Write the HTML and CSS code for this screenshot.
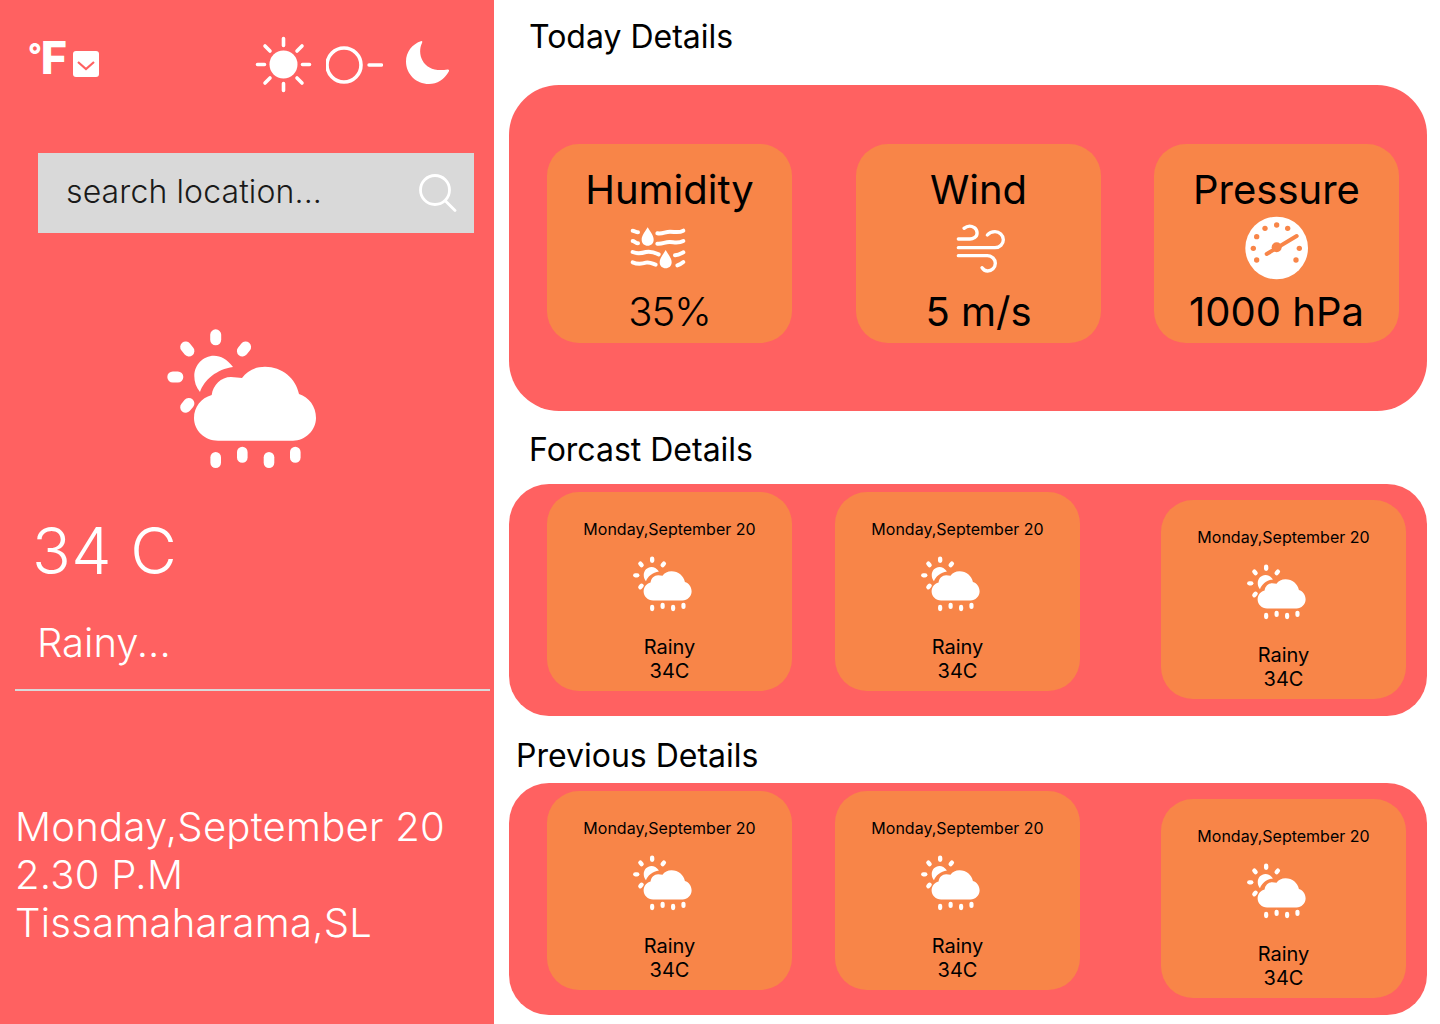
FILE: index.html
```html
<!DOCTYPE html>
<html lang="en">
<head>
<meta charset="UTF-8">
<meta name="viewport" content="width=device-width, initial-scale=1.0">
<title>Weather Dashboard</title>
<link rel="stylesheet" href="styles.css">
</head>
<body>
  <!-- shared weather icon -->
  <svg class="defs">
    <symbol id="rain-sun" viewBox="0 0 150 142">
      <g fill="#fff">
        <rect x="43.2" y="1.3" width="11" height="16" rx="5.5"/>
        <rect x="14.8" y="13" width="11" height="16" rx="5.5" transform="rotate(-40 20.3 21)"/>
        <rect x="71.5" y="13" width="11" height="16" rx="5.5" transform="rotate(40 77 21)"/>
        <rect x="0.3" y="43.5" width="16" height="11" rx="5.5"/>
        <rect x="14.8" y="69.3" width="11" height="16" rx="5.5" transform="rotate(40 20.3 77.3)"/>
        <path d="M66 39C60 31 54 27.7 47 27.7C36 27.7 27.3 37 27.3 48C27.3 54 29 59 33 64C37 52 50 41 66 39Z"/>
        <path d="M51 112.7C37.7 112.7 27 102.5 27 90C27 79 34 70 44.7 67C46 57 54 49 64 49C68 49 72 50 75 50C80 43 88 38.7 98 38.7C115 38.7 129 50.5 132 66C142 69 149 78.5 149 90C149 102.5 138 112.7 126 112.7Z"/>
        <rect x="43.4" y="124" width="10.6" height="16" rx="5.3"/>
        <rect x="70" y="118.7" width="10.6" height="16" rx="5.3"/>
        <rect x="96.7" y="124" width="10.6" height="16" rx="5.3"/>
        <rect x="123" y="118.7" width="10.6" height="16" rx="5.3"/>
      </g>
    </symbol>
  </svg>

  <div class="layout">
    <aside class="sidebar">
      <div class="top-bar">
        <div class="unit"><span class="deg">°</span>F</div>
        <svg class="unit-check" viewBox="0 0 26 26">
          <rect width="26" height="26" rx="3" fill="#fff"/>
          <path d="M5 11L13 18L21 11" fill="none" stroke="#ff6161" stroke-width="2.2"/>
        </svg>
        <div class="theme-icons">
          <svg class="sun" viewBox="0 0 57 57">
            <circle cx="28.5" cy="28.5" r="14" fill="#fff"/>
            <path d="M28.5 2.500V9.500M28.500 47.500V54.500M2.500 28.500H9.500M47.500 28.500H54.500M10 10L15 15M42 42L47 47M47 10L42 15M15 42L10 47" stroke="#fff" stroke-width="3.600" stroke-linecap="round"/>
          </svg>
          <svg class="toggle" viewBox="0 0 57 40">
            <circle cx="18" cy="20" r="17" fill="none" stroke="#fff" stroke-width="3.600"/>
            <path d="M43 20H55.500" stroke="#fff" stroke-width="3.400" stroke-linecap="round"/>
          </svg>
          <svg class="moon" viewBox="0 0 45 45">
            <path d="M16.500 1C17.500 1 17.500 2 17 3C14.500 8 14.500 15 17.500 20.500C21.500 28 30 31.500 42.500 29.500C44 29.200 44.500 30.500 43.800 31.500C39.500 39.500 32 44 24 44C11 44 1 34 1 21.500C1 12 7 4 16.500 1Z" fill="#fff"/>
          </svg>
        </div>
      </div>

      <div class="search">
        <span class="search-text">search location...</span>
        <svg class="search-icon" viewBox="0 0 38 38">
          <circle cx="16" cy="16" r="14.500" fill="none" stroke="#fff" stroke-width="2.800"/>
          <path d="M26.500 27L36 36.500" stroke="#fff" stroke-width="2.800" stroke-linecap="round"/>
        </svg>
      </div>

      <svg class="main-icon"><use href="#rain-sun"/></svg>
      <div class="temp">34 C</div>
      <div class="condition">Rainy...</div>
      <div class="divider"></div>
      <div class="date-info">
        Monday,September 20<br>
        2.30 P.M<br>
        Tissamaharama,SL
      </div>
    </aside>

    <main class="content">
      <h2 class="heading heading-today">Today Details</h2>
      <section class="panel panel-today">
        <div class="card stat-card">
          <div class="stat-text">Humidity</div>
          <div class="stat-icon">
            <svg class="humidity-icon" viewBox="0 0 330 210">
              <g fill="#fff">
                <path d="M113 37C122 52 131 62 131 74C131 85 123 92 113 92C103 92 95 85 95 74C95 62 104 52 113 37Z"/>
                <path d="M167 105C176 120 185 130 185 142C185 153 177 160 167 160C157 160 149 153 149 142C149 130 158 120 167 105Z"/>
              </g>
              <g fill="none" stroke="#fff" stroke-width="12" stroke-linecap="round">
                <path d="M68 47C73 47 78 52 84 52"/>
                <path d="M142 55C158 58 165 50 180 50C195 50 205 55 220 47"/>
                <path d="M68 78C73 78 78 85 84 85"/>
                <path d="M142 86C158 88 165 80 180 81C195 82 205 86 220 78"/>
                <path d="M68 111C80 116 95 115 108 111C120 108 135 113 146 118"/>
                <path d="M195 121C205 120 212 116 220 112"/>
                <path d="M68 142C80 147 95 147 108 143C118 140 128 146 137 149"/>
                <path d="M202 151C208 149 214 146 220 141"/>
              </g>
            </svg>
          </div>
          <div class="stat-text stat-percent">35%</div>
        </div>
        <div class="card stat-card stat-wind">
          <div class="stat-text">Wind</div>
          <div class="stat-icon">
            <svg class="wind-icon" viewBox="0 0 240 210">
              <g fill="none" stroke="#fff" stroke-width="10" stroke-linecap="round">
                <path d="M72 40C82 32 94 32 103 38C114 46 114 62 103 68C99 71 95 72 90 72H55"/>
                <path d="M55 98H165C180 98 190 87 190 74C190 60 178 50 165 50C155 50 147 54 142 60"/>
                <path d="M55 122H142C156 122 166 133 166 145C166 158 155 168 143 168C136 168 130 165 126 158"/>
              </g>
            </svg>
          </div>
          <div class="stat-text">5 m/s</div>
        </div>
        <div class="card stat-card stat-pressure">
          <div class="stat-text">Pressure</div>
          <div class="stat-icon">
            <svg class="gauge-icon" viewBox="0 0 255 225">
              <circle cx="125" cy="114" r="94" fill="#fff"/>
              <g fill="#f88548">
                <circle cx="55" cy="115" r="8"/>
                <circle cx="65" cy="80" r="8"/>
                <circle cx="90" cy="55" r="8"/>
                <circle cx="125" cy="45" r="8"/>
                <circle cx="158" cy="55" r="8"/>
                <circle cx="193" cy="115" r="8"/>
                <circle cx="183" cy="150" r="8"/>
                <circle cx="65" cy="150" r="8"/>
                <circle cx="125" cy="112" r="15"/>
              </g>
              <path d="M95 132L185 78" stroke="#f88548" stroke-width="12" stroke-linecap="round"/>
            </svg>
          </div>
          <div class="stat-text">1000 hPa</div>
        </div>
      </section>

      <h2 class="heading heading-forcast">Forcast Details</h2>
      <section class="panel panel-days">
        <div class="card day-card">
          <div class="day-date">Monday,September 20</div>
          <svg class="day-icon"><use href="#rain-sun"/></svg>
          <div class="day-text">Rainy<br>34C</div>
        </div>
        <div class="card day-card day-second">
          <div class="day-date">Monday,September 20</div>
          <svg class="day-icon"><use href="#rain-sun"/></svg>
          <div class="day-text">Rainy<br>34C</div>
        </div>
        <div class="card day-card day-third">
          <div class="day-date">Monday,September 20</div>
          <svg class="day-icon"><use href="#rain-sun"/></svg>
          <div class="day-text">Rainy<br>34C</div>
        </div>
      </section>

      <h2 class="heading heading-previous">Previous Details</h2>
      <section class="panel panel-days">
        <div class="card day-card">
          <div class="day-date">Monday,September 20</div>
          <svg class="day-icon"><use href="#rain-sun"/></svg>
          <div class="day-text">Rainy<br>34C</div>
        </div>
        <div class="card day-card day-second">
          <div class="day-date">Monday,September 20</div>
          <svg class="day-icon"><use href="#rain-sun"/></svg>
          <div class="day-text">Rainy<br>34C</div>
        </div>
        <div class="card day-card day-third">
          <div class="day-date">Monday,September 20</div>
          <svg class="day-icon"><use href="#rain-sun"/></svg>
          <div class="day-text">Rainy<br>34C</div>
        </div>
      </section>
    </main>
  </div>
</body>
</html>
```

FILE: styles.css
```css
body {
  margin: 0;
  background: #fff;
  color: #000;
  font-family: "Inter", sans-serif;
}

.defs {
  display: none;
}

.layout {
  display: flex;
  height: 1024px;
  overflow: hidden;
}

/* left column */
.sidebar {
  width: 494px;
  flex: none;
  padding-top: 36px;
  background: #ff6161;
  color: #fff;
  font-weight: 300;
}

.top-bar {
  display: flex;
  align-items: center;
  height: 56px;
  padding: 0 44px 0 28px;
}

.unit {
  font-size: 45px;
  font-weight: 800;
  line-height: 44px;
  margin-top: -16px;
}

.deg {
  font-size: 30px;
  vertical-align: 9px;
  margin-right: -1px;
}

.unit-check {
  width: 26px;
  height: 26px;
  margin: 0 0 0 6px;
}

.theme-icons {
  display: flex;
  align-items: center;
  margin-left: auto;
}

.sun {
  width: 57px;
  height: 57px;
}

.toggle {
  width: 57px;
  height: 40px;
  margin-left: 14px;
  margin-top: 2px;
}

.moon {
  width: 45px;
  height: 45px;
  margin-left: 22px;
  margin-top: -4px;
}

.search {
  display: flex;
  align-items: center;
  justify-content: space-between;
  box-sizing: border-box;
  width: 436px;
  height: 80px;
  margin: 61px 0 0 38px;
  padding: 0 17px 0 28px;
  background: #d9d9d9;
}

.search-text {
  margin-bottom: 4px;
  font-size: 32px;
  letter-spacing: 0.12px;
  color: #1a1a1a;
}

.search-icon {
  width: 38px;
  height: 38px;
}

.main-icon {
  display: block;
  width: 150px;
  height: 142px;
  margin: 95px 0 0 167px;
}

.temp {
  margin: 41px 0 0 32px;
  font-size: 64px;
  letter-spacing: 0.4px;
  line-height: 80px;
}

.condition {
  margin: 28px 0 0 37px;
  font-size: 40px;
  line-height: 48px;
}

.divider {
  width: 475px;
  height: 2px;
  margin: 22px 0 0 15px;
  background: #d9d9d9;
}

.date-info {
  margin: 112px 0 0 15px;
  font-size: 40px;
  letter-spacing: 0.27px;
  line-height: 48px;
}

/* right column */
.content {
  flex: 1;
  padding-left: 15px;
}

.heading {
  margin: 0 0 0 20px;
  font-size: 32px;
  font-weight: 400;
  line-height: 40px;
}

.heading-today {
  margin-top: 17px;
  margin-bottom: 28px;
}

.heading-forcast {
  margin-top: 19px;
  margin-bottom: 14px;
}

.heading-previous {
  margin-left: 7px;
  margin-top: 20px;
  margin-bottom: 7px;
}

.panel {
  display: flex;
  align-items: flex-start;
  box-sizing: border-box;
  width: 918px;
  padding-left: 38px;
  background: #ff6161;
}

.panel-today {
  height: 326px;
  padding-top: 59px;
  border-radius: 50px;
}

.panel-days {
  height: 232px;
  padding-top: 8px;
  border-radius: 40px;
}

.card {
  box-sizing: border-box;
  width: 245px;
  height: 199px;
  background: #f88548;
  border-radius: 32px;
  text-align: center;
}

.stat-card {
  padding-top: 22px;
}

.stat-wind {
  margin-left: 64px;
}

.stat-pressure {
  margin-left: 53px;
}

.stat-text {
  font-size: 40px;
  line-height: 48px;
}

.stat-percent {
  font-weight: 300;
  letter-spacing: -1px;
}

.stat-icon {
  display: flex;
  align-items: flex-end;
  justify-content: center;
  height: 70px;
  margin: 1px 0 3px;
}

.humidity-icon {
  width: 110px;
  height: 70px;
  margin-right: 10px;
}

.wind-icon {
  width: 80px;
  height: 70px;
  margin-left: 2px;
}

.gauge-icon {
  width: 85px;
  height: 75px;
  flex: none;
  margin-left: 2px;
}

.day-card {
  padding-top: 27px;
}

.day-second {
  margin-left: 43px;
}

.day-third {
  margin-left: 81px;
  margin-top: 8px;
}

.day-date {
  font-size: 16px;
  line-height: 20px;
}

.day-icon {
  display: block;
  width: 59px;
  height: 56px;
  margin: 17px 0 0 85.5px;
}

.day-text {
  margin-top: 23px;
  font-size: 20px;
  line-height: 24px;
}
```
